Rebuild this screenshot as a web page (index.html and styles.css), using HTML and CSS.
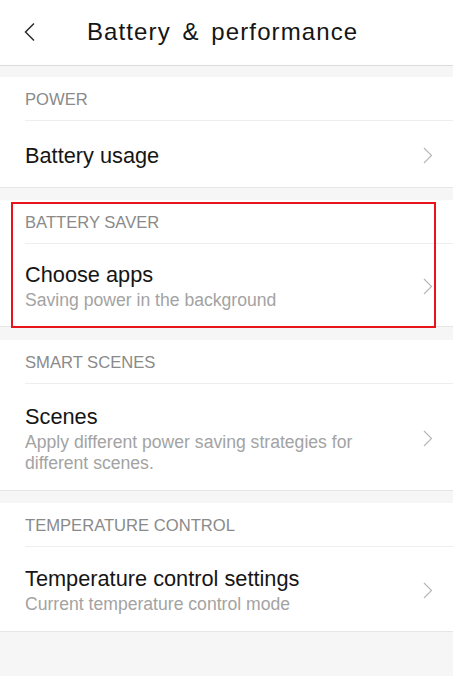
FILE: index.html
```html
<!DOCTYPE html>
<html>
<head>
<meta charset="utf-8">
<link rel="stylesheet" href="styles.css">
</head>
<body>
<div class="page">
  <header class="topbar">
    <svg class="back" width="14" height="20" viewBox="0 0 14 20"><path d="M12 1.5 L3.5 10 L12 18.5" fill="none" stroke="#2a2a2a" stroke-width="1.5"/></svg>
    <h1 class="title">Battery &amp; performance</h1>
  </header>

  <section class="group g1">
    <div class="label">POWER</div>
    <div class="row r1">
      <div class="texts"><div class="main">Battery usage</div></div>
      <svg class="chev" width="10" height="17" viewBox="0 0 10 17"><path d="M1 1 L8.5 8.5 L1 16" fill="none" stroke="#b8b8b8" stroke-width="1.2"/></svg>
    </div>
  </section>

  <section class="group g2">
    <div class="label">BATTERY SAVER</div>
    <div class="row r2">
      <div class="texts"><div class="main">Choose apps</div><div class="sub">Saving power in the background</div></div>
      <svg class="chev" width="10" height="17" viewBox="0 0 10 17"><path d="M1 1 L8.5 8.5 L1 16" fill="none" stroke="#b8b8b8" stroke-width="1.2"/></svg>
    </div>
    <div class="highlight"></div>
  </section>

  <section class="group g3">
    <div class="label">SMART SCENES</div>
    <div class="row r3">
      <div class="texts"><div class="main">Scenes</div><div class="sub">Apply different power saving strategies for different scenes.</div></div>
      <svg class="chev" width="10" height="17" viewBox="0 0 10 17"><path d="M1 1 L8.5 8.5 L1 16" fill="none" stroke="#b8b8b8" stroke-width="1.2"/></svg>
    </div>
  </section>

  <section class="group g4">
    <div class="label">TEMPERATURE CONTROL</div>
    <div class="row r4">
      <div class="texts"><div class="main">Temperature control settings</div><div class="sub">Current temperature control mode</div></div>
      <svg class="chev" width="10" height="17" viewBox="0 0 10 17"><path d="M1 1 L8.5 8.5 L1 16" fill="none" stroke="#b8b8b8" stroke-width="1.2"/></svg>
    </div>
  </section>
</div>
</body>
</html>
```

FILE: styles.css
```css
html, body {
  margin: 0;
  padding: 0;
  background: #f6f6f6;
}
.page {
  width: 453px;
  height: 676px;
  background: #f6f6f6;
  font-family: "Liberation Sans", Arial, sans-serif;
  display: flex;
  flex-direction: column;
}
.topbar {
  height: 65px;
  background: #fff;
  border-bottom: 1px solid #dcdcdc;
  display: flex;
  align-items: center;
}
.back {
  margin-left: 22px;
  margin-top: -1px;
}
.title {
  margin: -2px 0 0 51px;
  font-size: 24px;
  letter-spacing: 1.1px;
  word-spacing: 4px;
  font-weight: normal;
  color: #151515;
}
.group {
  background: #fff;
  border-bottom: 1px solid #e6e6e6;
  position: relative;
}
.g1 { margin-top: 11px; }
.g2 { margin-top: 12px; }
.g3 { margin-top: 13px; }
.g4 { margin-top: 12px; }
.label {
  height: 44px;
  margin-left: 25px;
  border-bottom: 1px solid #eeeeee;
  display: flex;
  align-items: center;
  font-size: 16.6px;
  color: #8a8a8a;
  padding-top: 3px;
  box-sizing: border-box;
}
.row {
  display: flex;
  align-items: center;
  padding: 3px 20px 0 25px;
  box-sizing: border-box;
}
.r1 { height: 66px; }
.r2 { height: 82px; }
.r3 { height: 106px; }
.r4 { height: 84px; }
.texts { flex: 1; }
.main {
  font-size: 21.75px;
  color: #151515;
  line-height: 26px;
}
.sub {
  font-size: 17.6px;
  color: #a3a3a3;
  line-height: 21px;
  margin-top: 2px;
}
.chev { flex: none; margin-left: 10px; }
.highlight {
  position: absolute;
  left: 11px;
  top: 2px;
  width: 421px;
  height: 122px;
  border: 2px solid #e8141c;
}
```
